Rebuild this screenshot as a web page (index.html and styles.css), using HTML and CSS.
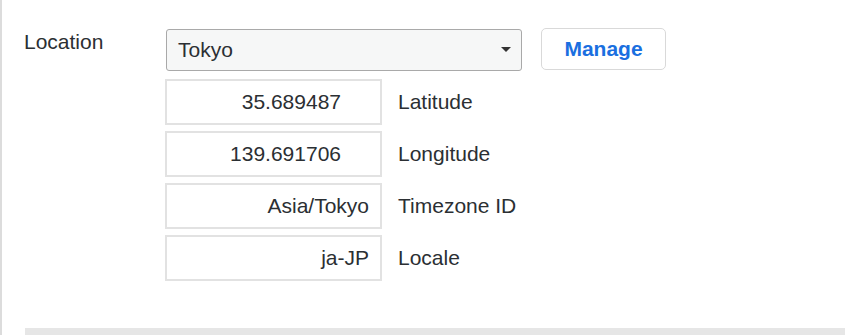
FILE: index.html
```html
<!DOCTYPE html>
<html lang="en">
<head>
  <meta charset="UTF-8" />
  <title>Location settings</title>
  <link rel="stylesheet" href="styles.css">
</head>
<body>
  <div class="panel">
    <div class="form-row">
      <label class="row-label">Location</label>
      <div class="fields">
        <div class="select-line">
          <div class="select">
            <span>Tokyo</span>
            <span class="caret"></span>
          </div>
          <button class="btn-manage">Manage</button>
        </div>
        <div class="field"><input class="num" type="text" value="35.689487"><span>Latitude</span></div>
        <div class="field"><input class="num" type="text" value="139.691706"><span>Longitude</span></div>
        <div class="field"><input type="text" value="Asia/Tokyo"><span>Timezone ID</span></div>
        <div class="field"><input type="text" value="ja-JP"><span>Locale</span></div>
      </div>
    </div>
    <div class="footer-bar"></div>
  </div>
</body>
</html>
```

FILE: styles.css
```css
* { box-sizing: border-box; }
body {
  margin: 0; background: #fff; color: #2b2f33;
  font-family: 'Liberation Sans', Arial, sans-serif; font-size: 21px;
  height: 335px; overflow: hidden;
}
.panel {
  border-left: 2px solid #dcdcdc; height: 335px;
  padding: 28px 0 0 22px;
}
.form-row { display: flex; }
.row-label {
  width: 142px; line-height: 28px; color: #2b2f33;
}
.fields { display: flex; flex-direction: column; gap: 6px; }
.select-line { display: flex; gap: 19px; margin-bottom: 2px; }
.select {
  width: 356px; height: 42px; margin-top: 1px;
  border: 1px solid #a9a9a9; border-radius: 3px;
  background: #f6f7f7; display: flex; align-items: center;
  justify-content: space-between; padding: 0 10px 0 11px;
}
.caret {
  width: 0; height: 0; border-left: 5px solid transparent;
  border-right: 5px solid transparent; border-top: 5px solid #333;
  margin-bottom: 2px;
}
.btn-manage {
  width: 125px; height: 42px; background: #fff;
  border: 1px solid #d9d9d9; border-radius: 5px;
  color: #1a6fe0; font: bold 21px 'Liberation Sans', Arial, sans-serif;
  padding: 0;
}
.field { display: flex; align-items: center; gap: 16px; margin-left: -1px; }
.field input {
  width: 217px; height: 46px; border: 2px solid #e2e2e2;
  font: 21px 'Liberation Sans', Arial, sans-serif; color: #2b2f33;
  text-align: right; padding: 0 11px; outline: none;
}
.field input.num { padding-right: 39px; }
.footer-bar {
  height: 8px; background: #e6e6e6; width: 820px;
  margin-top: 47px; margin-left: 1px;
}
```
